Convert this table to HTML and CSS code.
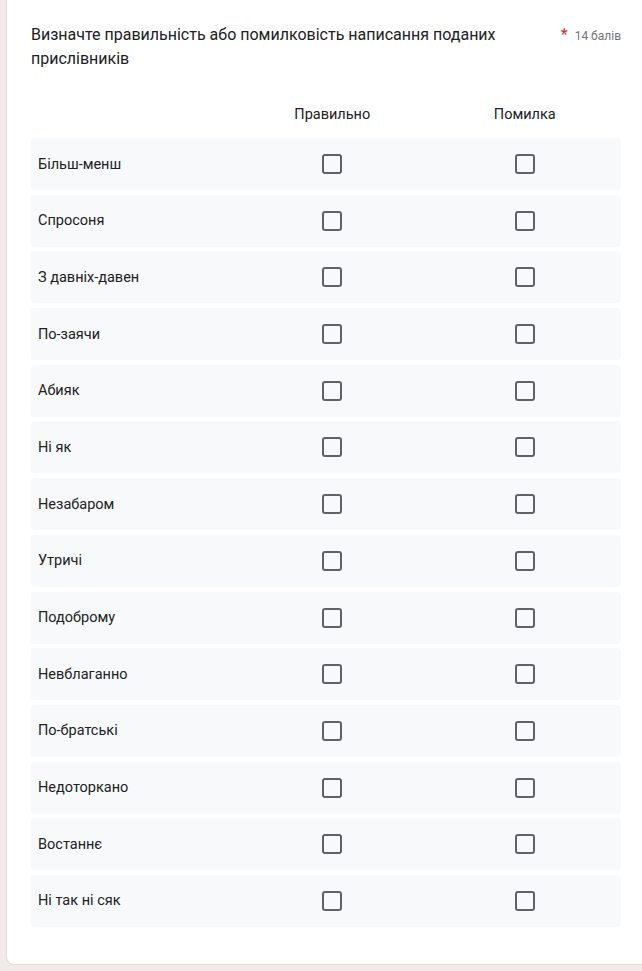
FILE: index.html
```html
<!DOCTYPE html>
<html lang="uk">
<head>
<meta charset="utf-8">
<link rel="stylesheet" href="styles.css">
</head>
<body>
<div class="card">
  <div class="head">
    <div class="title">Визначте правильність або помилковість написання поданих прислівників</div>
    <div class="points"><span class="req">*</span> 14 балів</div>
  </div>
  <div class="grid">
    <div class="colhead"><span></span><span>Правильно</span><span>Помилка</span></div>
    <div class="row"><span class="lbl">Більш-менш</span><span class="cell"><i class="cb"></i></span><span class="cell"><i class="cb"></i></span></div>
    <div class="row"><span class="lbl">Спросоня</span><span class="cell"><i class="cb"></i></span><span class="cell"><i class="cb"></i></span></div>
    <div class="row"><span class="lbl">З давніх-давен</span><span class="cell"><i class="cb"></i></span><span class="cell"><i class="cb"></i></span></div>
    <div class="row"><span class="lbl">По-заячи</span><span class="cell"><i class="cb"></i></span><span class="cell"><i class="cb"></i></span></div>
    <div class="row"><span class="lbl">Абияк</span><span class="cell"><i class="cb"></i></span><span class="cell"><i class="cb"></i></span></div>
    <div class="row"><span class="lbl">Ні як</span><span class="cell"><i class="cb"></i></span><span class="cell"><i class="cb"></i></span></div>
    <div class="row"><span class="lbl">Незабаром</span><span class="cell"><i class="cb"></i></span><span class="cell"><i class="cb"></i></span></div>
    <div class="row"><span class="lbl">Утричі</span><span class="cell"><i class="cb"></i></span><span class="cell"><i class="cb"></i></span></div>
    <div class="row"><span class="lbl">Подоброму</span><span class="cell"><i class="cb"></i></span><span class="cell"><i class="cb"></i></span></div>
    <div class="row"><span class="lbl">Невблаганно</span><span class="cell"><i class="cb"></i></span><span class="cell"><i class="cb"></i></span></div>
    <div class="row"><span class="lbl">По-братські</span><span class="cell"><i class="cb"></i></span><span class="cell"><i class="cb"></i></span></div>
    <div class="row"><span class="lbl">Недоторкано</span><span class="cell"><i class="cb"></i></span><span class="cell"><i class="cb"></i></span></div>
    <div class="row"><span class="lbl">Востаннє</span><span class="cell"><i class="cb"></i></span><span class="cell"><i class="cb"></i></span></div>
    <div class="row"><span class="lbl">Ні так ні сяк</span><span class="cell"><i class="cb"></i></span><span class="cell"><i class="cb"></i></span></div>
  </div>
</div>
</body>
</html>
```
FILE: styles.css
```css
html, body {
  margin: 0;
  padding: 0;
}
body {
  background: #f2eae8;
  font-family: Roboto, "Noto Sans", Arial, sans-serif;
  color: #202124;
  width: 642px;
  height: 971px;
  overflow: hidden;
}
.card {
  margin: -10px -20px 0 6px;
  background: #fff;
  border: 1px solid #dadce0;
  border-radius: 8px;
  padding: 32px 40px 0 24px;
  height: 975px;
  box-sizing: border-box;
}
.head {
  display: flex;
  justify-content: space-between;
  align-items: flex-start;
}
.title {
  font-size: 16px;
  line-height: 24px;
  width: 490px;
}
.points {
  font-size: 12px;
  color: #70757a;
  line-height: 24px;
  white-space: nowrap;
}
.req {
  color: #d93025;
  font-size: 16px;
  margin-right: 4px;
}
.grid {
  margin-top: 31px;
  width: 590px;
}
.colhead, .row {
  display: grid;
  grid-template-columns: 205px 1fr 1fr;
  align-items: center;
}
.colhead {
  height: 24px;
  font-size: 14.5px;
  margin-bottom: 12px;
}
.colhead span {
  text-align: center;
}
.row {
  height: 52px;
  background: #f8f9fa;
  border-radius: 4px;
  margin-bottom: 4.7px;
  font-size: 14.5px;
}
.lbl {
  padding-left: 7px;
}
.cell {
  display: flex;
  justify-content: center;
}
.cb {
  display: block;
  width: 16px;
  height: 16px;
  border: 2px solid #5f6368;
  border-radius: 3px;
}
```
